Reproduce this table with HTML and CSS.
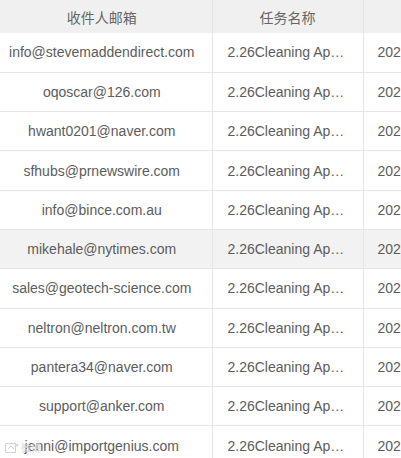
FILE: index.html
```html
<!DOCTYPE html>
<html>
<head>
    <meta charset="utf-8">
    <meta name="viewport" content="initial-scale=1, width=device-width">
    <link rel="stylesheet" href="styles.css">
</head>
<body>
    <table class="mail-table">
        <colgroup>
            <col class="col-email">
            <col class="col-task">
            <col class="col-time">
        </colgroup>
        <thead>
            <tr>
                <th>收件人邮箱</th>
                <th>任务名称</th>
                <th>发送时间</th>
            </tr>
        </thead>
        <tbody>
            <tr><td>info@stevemaddendirect.com</td><td class="task">2.26Cleaning Appliances</td><td class="time">2023-02-26 10:12:05</td></tr>
            <tr><td>oqoscar@126.com</td><td class="task">2.26Cleaning Appliances</td><td class="time">2023-02-26 10:12:05</td></tr>
            <tr><td>hwant0201@naver.com</td><td class="task">2.26Cleaning Appliances</td><td class="time">2023-02-26 10:12:05</td></tr>
            <tr><td>sfhubs@prnewswire.com</td><td class="task">2.26Cleaning Appliances</td><td class="time">2023-02-26 10:12:05</td></tr>
            <tr><td>info@bince.com.au</td><td class="task">2.26Cleaning Appliances</td><td class="time">2023-02-26 10:12:05</td></tr>
            <tr class="hover"><td>mikehale@nytimes.com</td><td class="task">2.26Cleaning Appliances</td><td class="time">2023-02-26 10:12:05</td></tr>
            <tr><td>sales@geotech-science.com</td><td class="task">2.26Cleaning Appliances</td><td class="time">2023-02-26 10:12:05</td></tr>
            <tr><td>neltron@neltron.com.tw</td><td class="task">2.26Cleaning Appliances</td><td class="time">2023-02-26 10:12:05</td></tr>
            <tr><td>pantera34@naver.com</td><td class="task">2.26Cleaning Appliances</td><td class="time">2023-02-26 10:12:05</td></tr>
            <tr><td>support@anker.com</td><td class="task">2.26Cleaning Appliances</td><td class="time">2023-02-26 10:12:05</td></tr>
            <tr><td>jenni@importgenius.com</td><td class="task">2.26Cleaning Appliances</td><td class="time">2023-02-26 10:12:05</td></tr>
        </tbody>
    </table>

    <!-- faint share watermark, bottom left -->
    <div class="watermark">
        <svg width="14" height="11" viewBox="0 0 14 11">
            <rect x="0.5" y="1.5" width="10" height="9" fill="none" stroke="#d4d4d4"/>
            <path d="M3 7 L6 4 L9 7" fill="none" stroke="#d4d4d4"/>
            <circle cx="12" cy="3" r="1.5" fill="#dadada"/>
        </svg>
        <span>微博</span>
    </div>
</body>
</html>
```

FILE: styles.css
```css
body {
    margin: 0;
    background-color: #fff;
    font-family: 'Liberation Sans', Arial, 'Noto Sans CJK SC', sans-serif;
    overflow: hidden;
    position: relative;
    height: 458px;
}
.mail-table {
    margin-left: -8px;
    width: 551px;
    table-layout: fixed;
    border-collapse: collapse;
    font-size: 14px;
    color: #5c5c5c;
}
.col-email { width: 220px; }
.col-task { width: 151px; }
.col-time { width: 180px; }

.mail-table th {
    height: 33px;
    padding: 0;
    background-color: #f0f0f0;
    font-weight: normal;
    color: #666;
    text-align: center;
    border-right: 1px solid #e4e4e4;
}
.mail-table td {
    height: 39.3px;
    padding: 0 6px;
    text-align: center;
    white-space: nowrap;
    overflow: hidden;
    border-bottom: 1px solid #e6e6e6;
    border-right: 1px solid #e6e6e6;
    box-sizing: border-box;
}
.mail-table td.task {
    padding: 0 15px;
    text-overflow: ellipsis;
}
.mail-table td.time {
    text-align: left;
    padding-left: 14px;
}
.mail-table tr.hover td {
    background-color: #f2f2f2;
}
.watermark {
    position: absolute;
    left: 5px;
    top: 440px;
    display: flex;
    align-items: center;
    gap: 2px;
    font-size: 10px;
    color: #d6d6d6;
}
```
